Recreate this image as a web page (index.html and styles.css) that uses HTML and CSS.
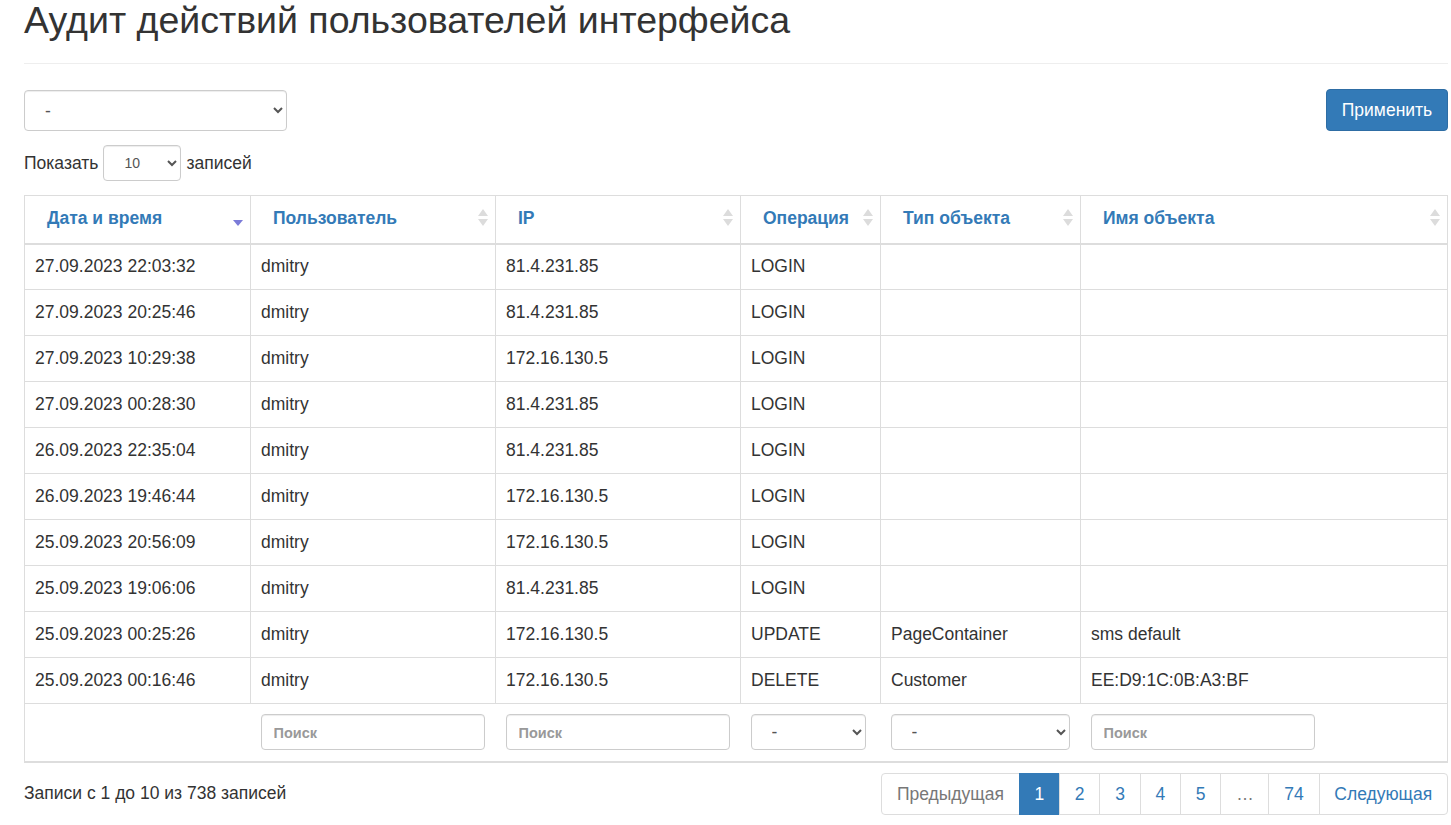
FILE: index.html
```html
<!DOCTYPE html>
<html lang="ru">
<head>
    <meta charset="UTF-8">
    <title>Аудит действий пользователей интерфейса</title>
    <link rel="stylesheet" href="styles.css">
</head>
<body>
    <div class="container">
        <div class="page-header">
            <h1>Аудит действий пользователей интерфейса</h1>
        </div>

        <div class="toolbar">
            <select class="form-control filter-select">
                <option>-</option>
            </select>
            <button type="button" class="btn-apply">Применить</button>
        </div>

        <div class="length-row">
            Показать
            <select class="form-control length-select">
                <option>10</option>
            </select>
            записей
        </div>

        <table class="audit-table">
            <colgroup>
                <col style="width: 226px">
                <col style="width: 245px">
                <col style="width: 245px">
                <col style="width: 140px">
                <col style="width: 200px">
                <col>
            </colgroup>
            <thead>
                <tr>
                    <th class="sorted">Дата и время
                        <svg class="sort-icon" width="12" height="10" viewBox="0 0 12 10"><path d="M1 2 L11 2 L6 8 Z" fill="#7b7bd8"/></svg>
                    </th>
                    <th>Пользователь
                        <svg class="sort-icon both" width="12" height="20" viewBox="0 0 12 20"><path d="M6 1 L11 8 L1 8 Z M1 11 L11 11 L6 18 Z" fill="#dcdcdc"/></svg>
                    </th>
                    <th>IP
                        <svg class="sort-icon both" width="12" height="20" viewBox="0 0 12 20"><path d="M6 1 L11 8 L1 8 Z M1 11 L11 11 L6 18 Z" fill="#dcdcdc"/></svg>
                    </th>
                    <th>Операция
                        <svg class="sort-icon both" width="12" height="20" viewBox="0 0 12 20"><path d="M6 1 L11 8 L1 8 Z M1 11 L11 11 L6 18 Z" fill="#dcdcdc"/></svg>
                    </th>
                    <th>Тип объекта
                        <svg class="sort-icon both" width="12" height="20" viewBox="0 0 12 20"><path d="M6 1 L11 8 L1 8 Z M1 11 L11 11 L6 18 Z" fill="#dcdcdc"/></svg>
                    </th>
                    <th>Имя объекта
                        <svg class="sort-icon both" width="12" height="20" viewBox="0 0 12 20"><path d="M6 1 L11 8 L1 8 Z M1 11 L11 11 L6 18 Z" fill="#dcdcdc"/></svg>
                    </th>
                </tr>
            </thead>
            <tbody>
                <tr><td>27.09.2023 22:03:32</td><td>dmitry</td><td>81.4.231.85</td><td>LOGIN</td><td></td><td></td></tr>
                <tr><td>27.09.2023 20:25:46</td><td>dmitry</td><td>81.4.231.85</td><td>LOGIN</td><td></td><td></td></tr>
                <tr><td>27.09.2023 10:29:38</td><td>dmitry</td><td>172.16.130.5</td><td>LOGIN</td><td></td><td></td></tr>
                <tr><td>27.09.2023 00:28:30</td><td>dmitry</td><td>81.4.231.85</td><td>LOGIN</td><td></td><td></td></tr>
                <tr><td>26.09.2023 22:35:04</td><td>dmitry</td><td>81.4.231.85</td><td>LOGIN</td><td></td><td></td></tr>
                <tr><td>26.09.2023 19:46:44</td><td>dmitry</td><td>172.16.130.5</td><td>LOGIN</td><td></td><td></td></tr>
                <tr><td>25.09.2023 20:56:09</td><td>dmitry</td><td>172.16.130.5</td><td>LOGIN</td><td></td><td></td></tr>
                <tr><td>25.09.2023 19:06:06</td><td>dmitry</td><td>81.4.231.85</td><td>LOGIN</td><td></td><td></td></tr>
                <tr><td>25.09.2023 00:25:26</td><td>dmitry</td><td>172.16.130.5</td><td>UPDATE</td><td>PageContainer</td><td>sms default</td></tr>
                <tr><td>25.09.2023 00:16:46</td><td>dmitry</td><td>172.16.130.5</td><td>DELETE</td><td>Customer</td><td>EE:D9:1C:0B:A3:BF</td></tr>
            </tbody>
            <tfoot>
                <tr>
                    <th></th>
                    <th><input type="text" class="form-control search-input" placeholder="Поиск"></th>
                    <th><input type="text" class="form-control search-input" placeholder="Поиск"></th>
                    <th><select class="form-control op-select"><option>-</option></select></th>
                    <th><select class="form-control type-select"><option>-</option></select></th>
                    <th><input type="text" class="form-control search-input" placeholder="Поиск"></th>
                </tr>
            </tfoot>
        </table>

        <div class="table-footer">
            <div class="info">Записи с 1 до 10 из 738 записей</div>
            <ul class="pagination">
                <li class="disabled"><a href="#">Предыдущая</a></li>
                <li class="active"><a href="#">1</a></li>
                <li><a href="#">2</a></li>
                <li><a href="#">3</a></li>
                <li><a href="#">4</a></li>
                <li><a href="#">5</a></li>
                <li class="disabled"><a href="#">…</a></li>
                <li><a href="#">74</a></li>
                <li><a href="#">Следующая</a></li>
            </ul>
        </div>
    </div>
</body>
</html>
```

FILE: styles.css
```css
body {
    margin: 0;
    font-family: "Liberation Sans", Arial, sans-serif;
    font-size: 17.5px;
    color: #333;
    background: #fff;
}
.container {
    padding: 0 3px 0 24px;
}
.page-header {
    padding-bottom: 23px;
    margin-bottom: 26px;
    border-bottom: 1px solid #eee;
}
.page-header h1 {
    margin: 0;
    font-size: 37.5px;
    font-weight: 400;
    line-height: 40px;
    color: #333;
}

/* form controls */
.form-control {
    font-family: inherit;
    font-size: 17.5px;
    color: #555;
    background-color: #fff;
    border: 1px solid #ccc;
    border-radius: 4px;
    box-shadow: inset 0 1px 1px rgba(0, 0, 0, 0.075);
    box-sizing: border-box;
}
select.form-control {
    padding: 0 10px 0 16px;
}
.toolbar {
    display: flex;
    justify-content: space-between;
    align-items: center;
}
.filter-select {
    width: 263px;
    height: 41px;
}
.btn-apply {
    width: 122px;
    height: 42px;
    margin-top: -1px;
    padding: 0;
    background-color: #337ab7;
    border: 1px solid #2e6da4;
    border-radius: 4px;
    color: #fff;
    font-family: inherit;
    font-size: 17.5px;
    cursor: pointer;
}
.length-row {
    display: flex;
    align-items: center;
    gap: 5px;
    margin-top: 14px;
    height: 36px;
}
.length-select {
    width: 78px;
    height: 36px;
    font-size: 14px;
}

/* table */
.audit-table {
    width: 1424px;
    margin-top: 14px;
    border-collapse: collapse;
    table-layout: fixed;
    border: 1px solid #ddd;
    border-bottom-width: 2px;
}
.audit-table th,
.audit-table td {
    border: 1px solid #ddd;
    text-align: left;
    white-space: nowrap;
    overflow: hidden;
    box-sizing: border-box;
}
.audit-table thead th {
    position: relative;
    height: 48px;
    padding: 0 30px 2px 22px;
    color: #337ab7;
    font-weight: 700;
    border-bottom: 2px solid #ddd;
}
.sort-icon {
    position: absolute;
    right: 6px;
    top: 13px;
}
.sort-icon.both {
    top: 12px;
}
.audit-table thead th.sorted .sort-icon {
    top: 22px;
}
.audit-table tbody td {
    height: 46px;
    padding: 0 10px;
}
.audit-table tfoot th {
    height: 58px;
    padding: 0 10px 0 10px;
    border-left: none;
    border-right: none;
    font-weight: 400;
}
.search-input {
    width: 224px;
    height: 36px;
    padding: 0 12px;
}
.search-input::placeholder {
    color: #999;
    font-weight: 700;
    font-size: 14.5px;
}
.op-select {
    width: 115px;
    height: 36px;
}
.type-select {
    width: 179px;
    height: 36px;
}

/* info + pagination */
.table-footer {
    display: flex;
    justify-content: space-between;
    align-items: center;
    margin-top: 10px;
}
.pagination {
    display: flex;
    list-style: none;
    margin: 0;
    padding: 0;
}
.pagination li a {
    display: block;
    height: 42px;
    line-height: 40px;
    padding: 0 14.8px;
    margin-left: -1px;
    border: 1px solid #ddd;
    box-sizing: border-box;
    color: #337ab7;
    text-decoration: none;
    background: #fff;
}
.pagination li:first-child a {
    margin-left: 0;
    border-radius: 4px 0 0 4px;
}
.pagination li:last-child a {
    border-radius: 0 4px 4px 0;
}
.pagination li.disabled a {
    color: #777;
}
.pagination li.active a {
    background-color: #337ab7;
    border-color: #337ab7;
    color: #fff;
}
```
